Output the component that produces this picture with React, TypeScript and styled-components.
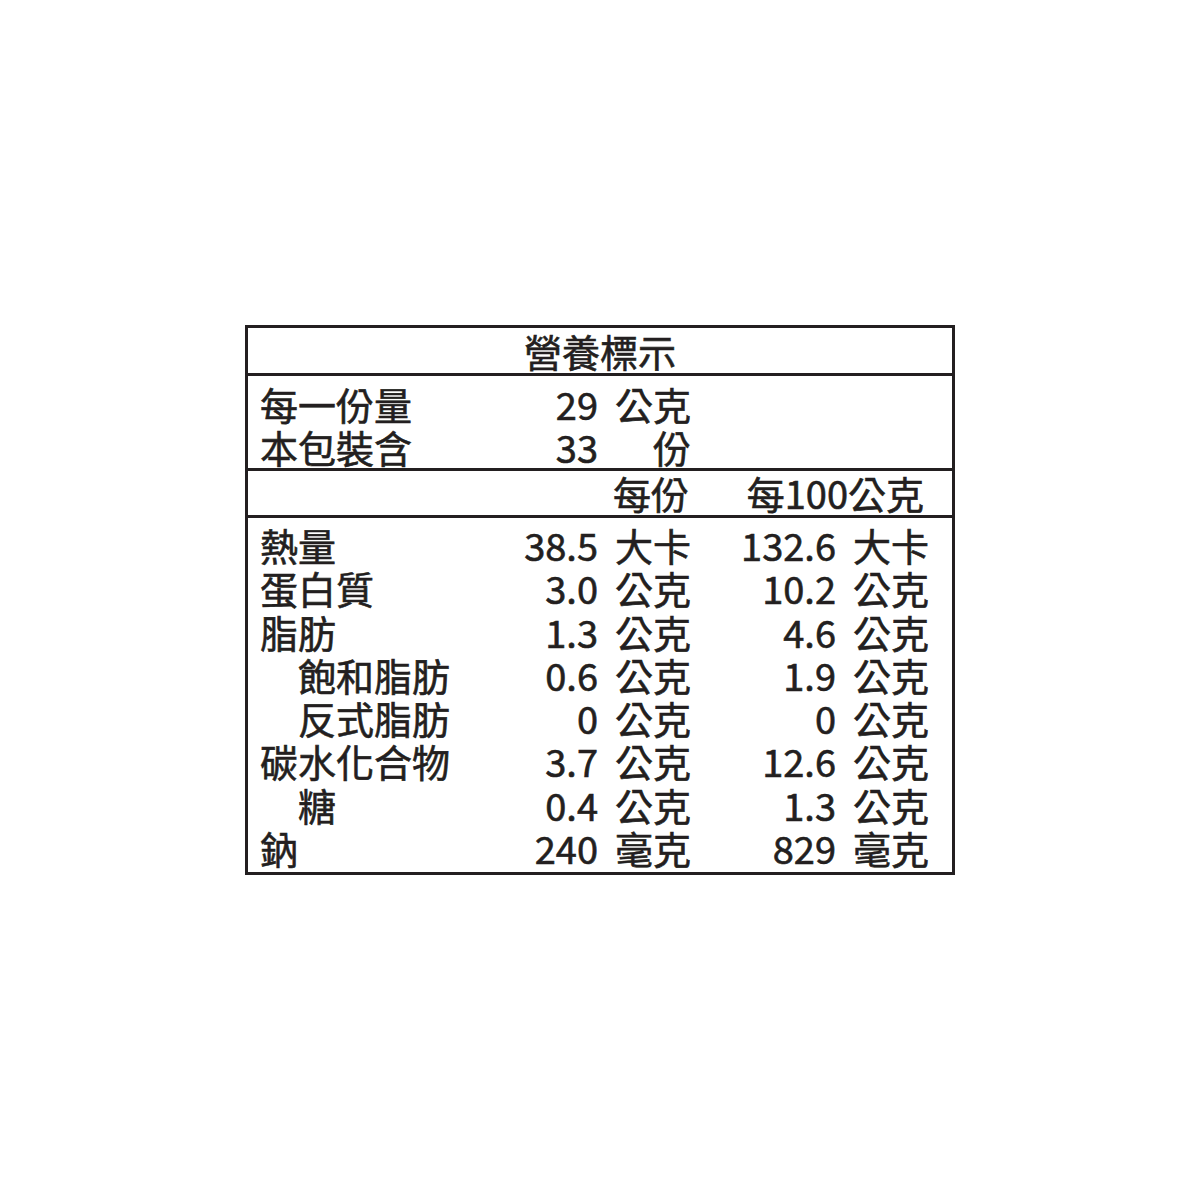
import React from "react";
import styled, { createGlobalStyle } from "styled-components";

const Global = createGlobalStyle`
  html, body { margin: 0; padding: 0; background: #fff; }
  body { font-family: "Noto Sans CJK TC", "Noto Sans", sans-serif; color: #231f20; }
`;

const Page = styled.div`
  width: 1200px;
  height: 1200px;
  display: flex;
  align-items: center;
  justify-content: center;
`;

const Label = styled.div`
  width: 710px;
  box-sizing: border-box;
  border: 3px solid #231f20;
  font-size: 38px;
  font-weight: 400;
  -webkit-text-stroke: 0.6px #231f20;
  line-height: 43.3px;
`;

const Title = styled.div`
  height: 45px;
  display: flex;
  align-items: center;
  justify-content: center;
  border-bottom: 3px solid #231f20;
`;

const Section = styled.div<{ $pt: number; $h: number; $last?: boolean }>`
  box-sizing: border-box;
  height: ${(p) => p.$h}px;
  padding: ${(p) => p.$pt}px 0 0 12px;
  border-bottom: ${(p) => (p.$last ? "none" : "3px solid #231f20")};
  display: grid;
  grid-template-columns: 210px 128px 93px 145px 93px;
  grid-auto-rows: 43.3px;
  align-content: start;
`;

const Name = styled.div<{ $indent?: boolean }>`
  padding-left: ${(p) => (p.$indent ? "38px" : "0")};
  white-space: nowrap;
`;

const Num = styled.div`
  text-align: right;
  white-space: nowrap;
`;

const Unit = styled.div`
  text-align: right;
  white-space: nowrap;
`;

const Head = styled.div<{ $span: number; $pr: number }>`
  grid-column: span ${(p) => p.$span};
  text-align: right;
  padding-right: ${(p) => p.$pr}px;
  white-space: nowrap;
`;

const rows: [string, boolean, string, string, string, string][] = [
  ["熱量", false, "38.5", "大卡", "132.6", "大卡"],
  ["蛋白質", false, "3.0", "公克", "10.2", "公克"],
  ["脂肪", false, "1.3", "公克", "4.6", "公克"],
  ["飽和脂肪", true, "0.6", "公克", "1.9", "公克"],
  ["反式脂肪", true, "0", "公克", "0", "公克"],
  ["碳水化合物", false, "3.7", "公克", "12.6", "公克"],
  ["糖", true, "0.4", "公克", "1.3", "公克"],
  ["鈉", false, "240", "毫克", "829", "毫克"],
];

export default function App() {
  return (
    <Page>
      <Global />
      <Label>
        <Title>營養標示</Title>
        <Section $pt={6} $h={95}>
          <Name>每一份量</Name>
          <Num>29</Num>
          <Unit>公克</Unit>
          <div />
          <div />
          <Name>本包裝含</Name>
          <Num>33</Num>
          <Unit>份</Unit>
          <div />
          <div />
        </Section>
        <Section $pt={0} $h={47}>
          <div />
          <div />
          <Head $span={1} $pr={2}>每份</Head>
          <Head $span={2} $pr={5}>每100公克</Head>
        </Section>
        <Section $pt={5} $h={354} $last>
          {rows.map(([n, ind, v1, u1, v2, u2]) => (
            <React.Fragment key={n}>
              <Name $indent={ind}>{n}</Name>
              <Num>{v1}</Num>
              <Unit>{u1}</Unit>
              <Num>{v2}</Num>
              <Unit>{u2}</Unit>
            </React.Fragment>
          ))}
        </Section>
      </Label>
    </Page>
  );
}
